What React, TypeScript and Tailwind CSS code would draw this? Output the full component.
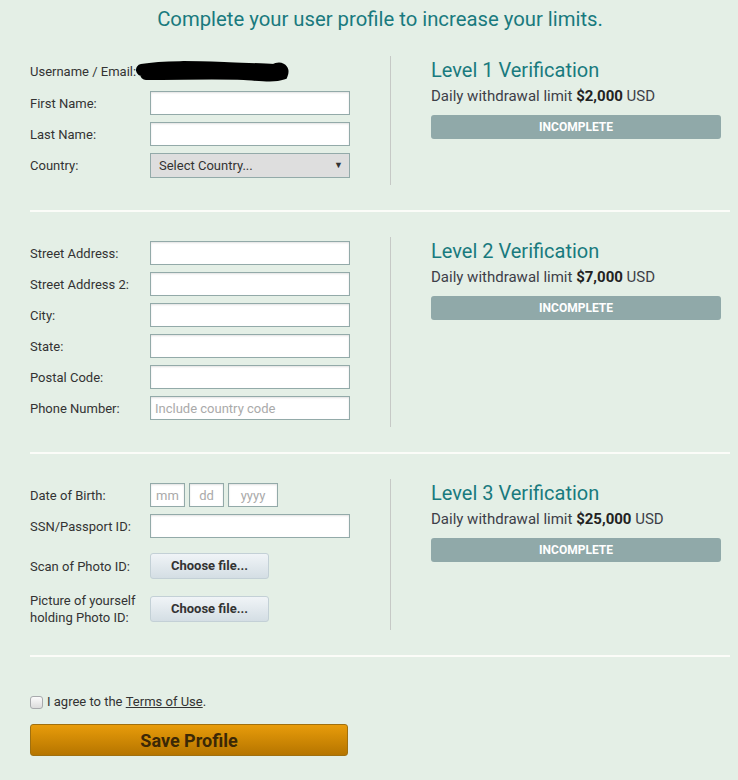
import React from 'react';

const field =
  "h-[24px] bg-white border border-[#93aaa9] shadow-[inset_0_1px_2px_rgba(0,0,0,0.12)] px-[4px] text-[13px] text-[#333] placeholder:text-[#aaa] outline-none font-['Roboto',sans-serif]";

const Row: React.FC<{ label: React.ReactNode; children?: React.ReactNode; className?: string }> = ({ label, children, className }) => (
  <div className={`flex items-center ${className ?? 'h-[24px]'}`}>
    <div className="w-[120px] text-[13px] leading-[17px] text-[#333]">{label}</div>
    {children}
  </div>
);

const TextRow: React.FC<{ label: string; placeholder?: string }> = ({ label, placeholder }) => (
  <Row label={label}>
    <input className={`${field} w-[200px]`} placeholder={placeholder} />
  </Row>
);

const Level: React.FC<{ n: number; limit: string }> = ({ n, limit }) => (
  <div className="flex-1 border-l border-[#c6c9c6] pl-[40px] pr-[9px] pt-[2px]">
    <div className="text-[20px] leading-[24px] text-[#197a7e]">Level {n} Verification</div>
    <div className="mt-[4px] text-[15px] leading-[20px] text-[#3d4048]">
      Daily withdrawal limit <span className="font-bold text-[#222]">{limit}</span> USD
    </div>
    <div className="mt-[9px] h-[24px] rounded-[3px] bg-[#90a9a9] flex items-center justify-center text-[12px] font-bold text-white">
      INCOMPLETE
    </div>
  </div>
);

const FileButton: React.FC = () => (
  <button className="w-[119px] h-[26px] rounded-[3px] border border-[#c3d0d6] bg-gradient-to-b from-[#f0f4f7] to-[#d4dee4] text-[13px] font-bold text-[#333]">
    Choose file...
  </button>
);

const Divider: React.FC = () => <div className="my-[25px] h-[2px] bg-[#fbfcf8]" />;

export default function App() {
  return (
    <div className="min-h-screen bg-[#e4efe6] font-['Roboto',sans-serif]">
      <div className="ml-[30px] w-[700px] pb-[25px]">
        <h1 className="pt-[5px] text-center text-[20.3px] leading-[28px] text-[#197a7e]">
          Complete your user profile to increase your limits.
        </h1>

        {/* level 1 */}
        <div className="mt-[23px] flex">
          <div className="w-[360px] pt-[4px] pb-[7px] flex flex-col gap-[7px]">
            <div className="flex items-center h-[24px] text-[13px] text-[#333]">
              <span>Username / Email:</span>
              <svg width="156" height="26" viewBox="0 0 156 26" className="-ml-[2px]">
                <path
                  d="M8 11 C30 7 60 8 90 9 C110 10 125 10 140 11 C146 8 150 10 148 15 C140 18 125 16 110 15 C80 14 50 15 12 15"
                  stroke="#000"
                  strokeWidth="12"
                  strokeLinecap="round"
                  fill="none"
                />
              </svg>
            </div>
            <TextRow label="First Name:" />
            <TextRow label="Last Name:" />
            <Row label="Country:" className="h-[25px]">
              <div className="w-[200px] h-[25px] bg-[#dedede] border border-[#93aaa9] flex items-center justify-between pl-[8px] pr-[6px] text-[13px] text-[#333]">
                <span>Select Country...</span>
                <span className="text-[9px]">▼</span>
              </div>
            </Row>
          </div>
          <Level n={1} limit="$2,000" />
        </div>

        <Divider />

        {/* level 2 */}
        <div className="flex">
          <div className="w-[360px] pt-[4px] pb-[7px] flex flex-col gap-[7px]">
            <TextRow label="Street Address:" />
            <TextRow label="Street Address 2:" />
            <TextRow label="City:" />
            <TextRow label="State:" />
            <TextRow label="Postal Code:" />
            <TextRow label="Phone Number:" placeholder="Include country code" />
          </div>
          <Level n={2} limit="$7,000" />
        </div>

        <Divider />

        {/* level 3 */}
        <div className="flex">
          <div className="w-[360px] pt-[4px] pb-[4px] flex flex-col">
            <Row label="Date of Birth:">
              <div className="flex gap-[4px]">
                <input className={`${field} w-[35px] text-center`} placeholder="mm" />
                <input className={`${field} w-[35px] text-center`} placeholder="dd" />
                <input className={`${field} w-[50px] text-center`} placeholder="yyyy" />
              </div>
            </Row>
            <div className="mt-[7px]">
              <TextRow label="SSN/Passport ID:" />
            </div>
            <Row label="Scan of Photo ID:" className="mt-[15px] h-[26px]">
              <FileButton />
            </Row>
            <Row
              label={
                <>
                  Picture of yourself
                  <br />
                  holding Photo ID:
                </>
              }
              className="mt-[13px] h-[34px]"
            >
              <FileButton />
            </Row>
          </div>
          <Level n={3} limit="$25,000" />
        </div>

        <Divider />

        <label className="mt-[36px] flex items-center text-[13px] leading-[18px] text-[#333]">
          <span className="mr-[4px] h-[13px] w-[13px] rounded-[3px] border border-[#a8aaad] bg-gradient-to-b from-[#fbfbfb] to-[#dcdcdc]" />
          I agree to the&nbsp;<span className="underline">Terms of Use</span>.
        </label>

        <button className="mt-[13px] w-[318px] h-[32px] rounded-[3px] border border-[#a0700f] bg-gradient-to-b from-[#e89c0b] to-[#b67500] text-[18px] font-bold text-[#3b2806]">
          Save Profile
        </button>
      </div>
    </div>
  );
}
